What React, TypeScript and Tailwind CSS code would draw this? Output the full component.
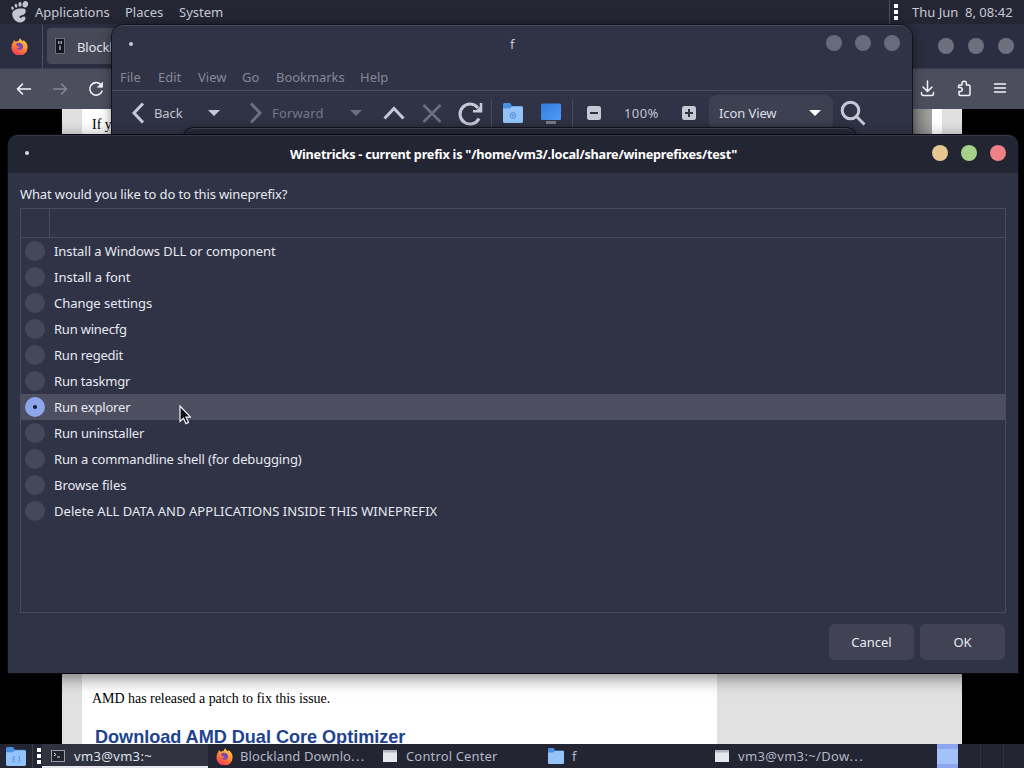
import React from 'react';

const OPTIONS: [string, string][] = [
  ['Install a Windows DLL or component', 'tracking-[-0.06px]'],
  ['Install a font', 'tracking-[0px]'],
  ['Change settings', 'tracking-[-0.04px]'],
  ['Run winecfg', 'tracking-[-0.22px]'],
  ['Run regedit', 'tracking-[-0.22px]'],
  ['Run taskmgr', 'tracking-[-0.18px]'],
  ['Run explorer', 'tracking-[-0.18px]'],
  ['Run uninstaller', 'tracking-[-0.16px]'],
  ['Run a commandline shell (for debugging)', 'tracking-[-0.13px]'],
  ['Browse files', 'tracking-[-0.06px]'],
  ['Delete ALL DATA AND APPLICATIONS INSIDE THIS WINEPREFIX', 'tracking-[0.055px]'],
];

function Firefox() {
  return (
    <svg width="17" height="17" viewBox="0 0 18 18" className="block shrink-0">
      <defs>
        <linearGradient id="fx" x1="0.8" y1="0" x2="0.3" y2="1">
          <stop offset="0" stopColor="#ffd84a" />
          <stop offset="0.45" stopColor="#ff9130" />
          <stop offset="1" stopColor="#f5345c" />
        </linearGradient>
      </defs>
      <path d="M2.4 4.6 3 2.2l2.2 1.9C6 3.5 7.2 3.2 8 3.300c.2-1.400 1-2.300 2-3 .3 1.700 1.300 2 2.400 3.200l.9-1.200c2.600 1.500 4.400 4 4.200 7.300A8.500 8.500 0 1 1 .7 8.400c.1-1.500.7-2.800 1.700-3.800z" fill="url(#fx)" />
      <path d="M5 7C6.500 4.600 9.500 4.600 11.500 6.200c1.900 1.600 1.700 4.400-.1 5.600-2.100 1.300-5.300.3-5.500-1.800 1.200.8 3 .6 3.600-.4-1.700-.1-3-1.300-4.500-2.600z" fill="#7b45b8" />
    </svg>
  );
}

function Folder({ w, h, children }: { w: number; h: number; children?: React.ReactNode }) {
  return (
    <svg width={w} height={h} viewBox="0 0 20 20" preserveAspectRatio="none" className="block shrink-0">
      <path d="M0 1.500A1.500 1.500 0 0 1 1.500 0H7l2 3h9.500A1.500 1.500 0 0 1 20 4.500V10H0z" fill="#4a90e2" />
      <path d="M0 5.500h6.500L9 3.600h9.500A1.500 1.500 0 0 1 20 5v13.500a1.500 1.500 0 0 1-1.500 1.500h-17A1.500 1.500 0 0 1 0 18.500z" fill="#93c3f8" />
      {children}
    </svg>
  );
}

function Foot() {
  return (
    <svg width="20" height="22" viewBox="0 0 20 22" className="block shrink-0" fill="#c3c6d2">
      <path d="M13 7.600C8 7 2.300 8.800 2.200 13c0 4 3.600 8.200 7.300 8.500 3.700.2 6.300-2.300 5.900-4.700-.3-1.500-2.300-1.600-3.400-.6-1 .9-2.200.9-2.500.1-.4-1.300 1.500-1.800 4-2.600 2.800-1 3.700-5.600-.5-6.100z" />
      <ellipse cx="15.300" cy="3.300" rx="2.700" ry="3.200" transform="rotate(20 15.300 3.300)" />
      <ellipse cx="10" cy="3.400" rx="1.600" ry="2.300" />
      <ellipse cx="6" cy="4.800" rx="1.300" ry="2" transform="rotate(-12 6 4.800)" />
      <ellipse cx="2.500" cy="7.200" rx="1.200" ry="1.700" transform="rotate(-20 2.500 7.200)" />
    </svg>
  );
}

function Grip() {
  return (
    <div className="flex shrink-0 flex-col gap-[2px]">
      <i className="block size-1 bg-white" />
      <i className="block size-1 bg-white" />
      <i className="block size-1 bg-white" />
    </div>
  );
}

function Arrow({ color }: { color: string }) {
  return (
    <svg width="12" height="6" viewBox="0 0 12 6" className="block shrink-0">
      <path d="M0 0h12L6 6z" fill={color} />
    </svg>
  );
}

function Dots({ tint }: { tint: string[] }) {
  return (
    <div className="flex gap-[13px]">
      {tint.map((t, i) => (
        <i key={i} className={'block size-4 rounded-full ' + t} />
      ))}
    </div>
  );
}

function TopPanel() {
  return (
    <header className="flex h-6 items-center bg-[#242634] text-[#c6c9d4]">
      <div className="ml-[10px] w-[25px]"><Foot /></div>
      <span className="w-[90px]">Applications</span>
      <span className="w-[54px]">Places</span>
      <span className="w-[60px]">System</span>
      <div className="ml-auto flex h-6 w-[135px] items-center border-l border-[#4b4e5e] pl-1">
        <Grip />
        <span className="ml-[14px] whitespace-pre">Thu Jun  8, 08:42</span>
      </div>
    </header>
  );
}

function Browser() {
  return (
    <section className="flex h-[720px] flex-col bg-black">
      <div className="flex h-11 shrink-0 bg-[#2b2e40]">
        <div className="flex w-[43px] items-center justify-center border-r border-[#4d5060] pr-[3px]"><Firefox /></div>
        <div className="mt-1 ml-1 flex h-9 w-[200px] items-center rounded bg-[#474958] pl-[8px] text-[#e2e4eb]">
          <svg width="10" height="16" viewBox="0 0 10 16" className="block">
            <rect x=".5" y=".5" width="9" height="15" fill="#15161d" stroke="#6b6e78" />
            <path d="M3 3h1.500v3H3zM5.500 3H7v3H5.500zM4.200 7.500h1.600V12H4.200z" fill="#9a9da5" />
          </svg>
          <span className="ml-[12px] pt-px tracking-[-0.1px]">Blockland</span>
        </div>
        <div className="mt-[14px] mr-[10px] ml-auto flex gap-[14px]">
          <i className="block size-4 rounded-full bg-[#6d6f7f]" />
          <i className="block size-4 rounded-full bg-[#6d6f7f]" />
          <i className="block size-4 rounded-full bg-[#6d6f7f]" />
        </div>
      </div>
      <div className="flex h-[41px] shrink-0 items-center border-t border-[#3a3c4c] bg-[#4c4e5e]">
        <svg width="112" height="40" viewBox="0 0 112 40" fill="none" stroke="#f4f5f8" strokeWidth="1.600" strokeLinecap="round" strokeLinejoin="round">
          <path d="M30.500 20h-13M22.500 15l-5 5 5 5" />
          <path d="M53.500 20h13M61.500 15l5 5-5 5" stroke="#85879a" />
          <path d="M102 22.200a6.300 6.300 0 1 1-1.500-6.900l1.500 1.500" />
          <path d="M102.500 13.500v4.700h-4.700z" fill="#f4f5f8" strokeWidth=".8" />
        </svg>
        <svg width="112" height="40" viewBox="0 0 112 40" className="ml-auto" fill="none" stroke="#f4f5f8" strokeWidth="1.500" strokeLinecap="round" strokeLinejoin="round">
          <path d="M15.500 12v10M11 18l4.500 4.500L20 18M9.500 23.500v1q0 2 2 2h8q2 0 2-2v-1" />
          <path d="M47.500 16h2.500v-1.500a2.200 2.200 0 0 1 4.400 0V16h2.100q1.500 0 1.500 1.500V25q0 1.500-1.500 1.500h-8q-1.500 0-1.500-1.500v-2.500h1.200a2 2 0 0 0 0-4h-1.700v-1q0-1.500 1-1.500" />
          <path d="M82.500 15h11M82.500 19h11M82.500 23h11" />
        </svg>
      </div>
      <div className="mx-[62px] flex h-[635px] bg-[#e1e1e1] px-5">
        <article className="w-[635px] bg-white pt-[7px] text-black">
          <p className="h-[573px] pl-[10px] font-['Liberation_Serif',serif] text-[14px] leading-[18px]">If you</p>
          <p className="pl-[10px] font-['Liberation_Serif',serif] text-[14px] leading-[20px] tracking-[-0.04px]">AMD has released a patch to fix this issue.</p>
          <h2 className="mt-[20px] pl-[13px] font-['Liberation_Sans',sans-serif] text-[18.100px] leading-[17px] font-bold tracking-[-0.02px] text-[#20428f]">Download AMD Dual Core Optimizer</h2>
        </article>
        <div className="ml-auto h-[200px] w-[155px] bg-linear-to-r from-[#777] from-80% to-[#a2a29e] to-93%">
          <i className="ml-auto block h-full w-[10px] bg-white" />
        </div>
      </div>
    </section>
  );
}

function FileManager() {
  return (
    <section className="absolute top-[25px] left-[112px] h-[300px] w-[800px] overflow-hidden rounded-t-xl border-t border-[#494c5e] bg-[#303346] text-[#c0c3d0] shadow-[0_0_0_1px_#11121a,0_2px_12px_#0008]">
      <div className="flex h-[38px] items-center pb-[2px]">
        <i className="mb-px ml-[17px] block size-1 rounded-full bg-[#c6c9d4]" />
        <span className="ml-[377px]">f</span>
        <div className="mr-3 mb-[2px] ml-auto"><Dots tint={['bg-[#686b7b]', 'bg-[#686b7b]', 'bg-[#686b7b]']} /></div>
      </div>
      <nav className="flex h-[27px] items-center border-b border-[#4a4d5f] pl-2 text-[#858897]">
        <span className="w-[38px]">File</span>
        <span className="w-10">Edit</span>
        <span className="w-11">View</span>
        <span className="w-[34px]">Go</span>
        <span className="w-[84px] tracking-[-0.05px]">Bookmarks</span>
        <span>Help</span>
      </nav>
      <div className="flex h-[44px] items-center">
        <svg width="14" height="22" viewBox="0 0 14 22" className="ml-[19px]" fill="none" stroke="#c6c9d5" strokeWidth="3"><path d="M12 1.500 3 11l9 9.500" /></svg>
        <span className="ml-[9px] w-[54px] tracking-[-0.1px]">Back</span>
        <Arrow color="#c6c9d5" />
        <svg width="14" height="22" viewBox="0 0 14 22" className="ml-[29px]" fill="none" stroke="#6c6f7f" strokeWidth="3"><path d="m2 1.500 9 9.500-9 9.500" /></svg>
        <span className="ml-[9px] w-[78px] tracking-[0.15px] text-[#74778a]">Forward</span>
        <Arrow color="#6c6f7f" />
        <svg width="102" height="28" viewBox="0 0 102 28" className="ml-[19px]" fill="none" stroke="#c6c9d5" strokeWidth="3">
          <path d="m3.500 19.500 9.500-10 9.500 10" />
          <path d="m42.500 6 17 17M59.500 6l-17 17" stroke="#6c6f7f" strokeWidth="2.500" />
          <path d="M98 19.500a10 10 0 1 1-1-10.500" />
          <path d="M101.300 4v9.500H92v-2.400h3.500l3.200-3.200V4z" fill="#c6c9d5" stroke="none" />
        </svg>
        <i className="ml-[8px] block h-7 w-px bg-[#484b5c]" />
        <div className="ml-[11px]">
          <Folder w={20} h={20}><circle cx="10" cy="12.500" r="2.800" fill="none" stroke="#498fdf" /><path d="M8.500 12h3M10 12v2" stroke="#498fdf" /></Folder>
        </div>
        <svg width="20" height="21" viewBox="0 0 20 21" className="ml-[18px]">
          <defs><linearGradient id="scr" x2="1" y2="1"><stop stopColor="#337bdd" /><stop offset="1" stopColor="#509cf5" /></linearGradient></defs>
          <rect y=".5" width="20" height="16.500" rx="1.300" fill="url(#scr)" />
          <path d="M5 18h10v3H5z" fill="#777b86" />
        </svg>
        <i className="ml-[11px] block h-7 w-px bg-[#484b5c]" />
        <svg width="14" height="14" viewBox="0 0 14 14" className="ml-[14px]"><rect width="14" height="14" rx="2.500" fill="#c6c9d5" /><path d="M3 7h8" stroke="#303346" strokeWidth="2" /></svg>
        <span className="ml-[23px] w-[58px] tracking-[0.4px]">100%</span>
        <svg width="14" height="14" viewBox="0 0 14 14"><rect width="14" height="14" rx="2.500" fill="#c6c9d5" /><path d="M3 7h8M7 3v8" stroke="#303346" strokeWidth="2" /></svg>
        <div className="ml-[13px] flex h-9 w-[124px] items-center rounded-lg bg-[#3d4051] pl-[10px] text-[#dcdfe8]">
          <span className="w-[90px] tracking-[-0.1px]">Icon View</span>
          <Arrow color="#fff" />
        </div>
        <svg width="26" height="26" viewBox="0 0 26 26" className="ml-[7px]" fill="none" stroke="#c6c9d5" strokeWidth="3"><circle cx="10.500" cy="10.500" r="8.300" /><path d="m16.500 16.500 8 8" /></svg>
      </div>
    </section>
  );
}

function Dialog() {
  return (
    <section className="absolute top-[135px] left-2 flex h-[538px] w-[1010px] flex-col overflow-hidden rounded-t-[10px] border-t border-[#363849] bg-[#303346] text-[#e6e9f1] shadow-[0_0_0_1px_#090a0f,0_4px_18px_#0008]">
      <div className="flex h-[37px] shrink-0 items-center bg-[#242532] pb-[2px]">
        <i className="mb-[2px] ml-[17px] block size-1 rounded-full bg-[#d6d9e3]" />
        <h1 className="ml-[261px] text-[12.700px] font-bold tracking-[-0.235px] whitespace-nowrap text-white">Winetricks - current prefix is "/home/vm3/.local/share/wineprefixes/test"</h1>
        <div className="mr-3 mb-[2px] ml-auto"><Dots tint={['bg-[#e5c890]', 'bg-[#a6d18a]', 'bg-[#ed8286]']} /></div>
      </div>
      <p className="mt-[11px] ml-3 h-[24px] leading-5 tracking-[-0.13px]">What would you like to do to this wineprefix?</p>
      <div className="ml-3 h-[405px] w-[986px] border border-[#484b5e]">
        <div className="flex h-[29px] border-b border-[#484b5e]"><i className="block w-[29px] border-r border-[#484b5e]" /></div>
        {OPTIONS.map(([label, tracking], i) => {
          const on = i === 6;
          return (
            <label key={label} className={'flex h-[26px] items-center pl-1 ' + (on ? 'bg-[#4d4f60]' : '')}>
              <span className={'flex size-5 items-center justify-center rounded-full ' + (on ? 'bg-[#8ca6eb]' : 'bg-[#454859]')}>
                {on && <i className="block size-1 rounded-full bg-[#18192a]" />}
              </span>
              <span className={'ml-[9px] ' + tracking}>{label}</span>
            </label>
          );
        })}
      </div>
      <div className="mt-[11px] mr-[13px] flex justify-end gap-[6px]">
        <button className="h-[36px] w-[85px] rounded-md bg-[#414355]">Cancel</button>
        <button className="h-[36px] w-[85px] rounded-md bg-[#414355]">OK</button>
      </div>
    </section>
  );
}

function WindowIcon() {
  return (
    <svg width="14" height="12" viewBox="0 0 14 12" className="block shrink-0"><path d="M0 0h14v12H0z" fill="#e5e7ea" /><path d="M0 0h14v2.500H0z" fill="#b2b5c0" /></svg>
  );
}

function Taskbar() {
  return (
    <footer className="flex h-6 items-center bg-[#232533] text-[#b4b7c5]">
      <div className="flex h-6 w-[33px] items-center border-r border-[#3b3d4b] pl-[6px]">
        <Folder w={20} h={19}><path d="M9.500 10.500H7v5h2.500M7 13h2M12 10.500h1.500v5H12" stroke="#5c9ce5" fill="none" /></Folder>
      </div>
      <div className="ml-1"><Grip /></div>
      <div className="ml-[1px] flex h-6 w-[166px] items-center border-b-2 border-[#e5e6eb] bg-[#303240] pt-px pl-[9px] text-[#dfe2eb]">
        <svg width="14" height="12" viewBox="0 0 14 12" className="block"><rect x=".5" y=".5" width="13" height="11" fill="#20222c" stroke="#9a9ca7" /><path d="m3 3 2 1.500L3 6M6 7h3" stroke="#d7d8df" fill="none" /></svg>
        <span className="ml-[9px] tracking-[0.33px]">vm3@vm3:~</span>
      </div>
      <div className="ml-2 flex w-[167px] items-center"><Firefox /><span className="ml-[7px] tracking-[0.1px]">Blockland Downlo<span className="tracking-[1.400px]">...</span></span></div>
      <div className="flex w-[165px] items-center"><WindowIcon /><span className="ml-[9px] tracking-[0.15px]">Control Center</span></div>
      <div className="flex w-[167px] items-center"><Folder w={16} h={16} /><span className="ml-2">f</span></div>
      <div className="flex w-[222px] items-center"><WindowIcon /><span className="ml-[9px] tracking-[0.33px]">vm3@vm3:~/Dow<span className="tracking-[1.400px]">...</span></span></div>
      <div className="flex h-6 w-[87px]">
        <div className="w-[21px] border-t-[5px] border-b-[4px] border-[#8fa5ef] bg-[#a3c2f7]" />
        <i className="ml-[22px] block w-px bg-[#30333f]" />
        <i className="ml-[22px] block w-px bg-[#30333f]" />
      </div>
    </footer>
  );
}

export default function App() {
  return (
    <main className="relative flex h-[768px] w-[1024px] flex-col overflow-hidden bg-black font-['Noto_Sans',sans-serif] text-[13px] leading-5 whitespace-nowrap">
      <TopPanel />
      <Browser />
      <FileManager />
      <div className="absolute top-32 left-[184px] h-60 w-[672px] rounded-t-[10px] border-t border-[#414457] bg-[#262837] shadow-[0_0_0_1px_#10111a,0_0_7px_#0006]" />
      <Dialog />
      <Taskbar />
      <svg width="12" height="20" viewBox="0 0 12 20" className="absolute top-[405px] left-[179px]">
        <path d="M1 1v15.500l3.500-3.200 2.400 5.300 2.600-1.200-2.400-5.200h4.400z" fill="#111217" stroke="#f4f4f6" strokeWidth="1.200" />
      </svg>
    </main>
  );
}
